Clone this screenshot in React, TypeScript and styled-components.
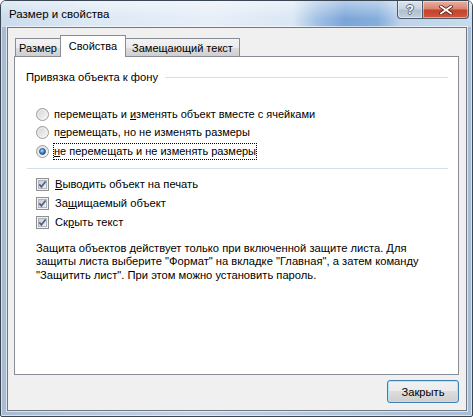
import React from 'react';
import styled, { createGlobalStyle } from 'styled-components';

const Global = createGlobalStyle`
  html, body { margin: 0; padding: 0; background: #ffffff; }
  body {
    font-family: "Liberation Sans", Arial, sans-serif;
    font-size: 11px;
    color: #000;
  }
  * { box-sizing: border-box; }
`;

const Window = styled.div`
  width: 473px;
  height: 417px;
  display: flex;
  flex-direction: column;
  border: 1px solid #3a4654;
  border-radius: 6px 6px 2px 2px;
  overflow: hidden;
  background: linear-gradient(90deg, #a8bbd0 0%, #c3d2e3 40%, #b4c6da 70%, #aabdd2 100%);
  box-shadow: inset 0 0 0 1px rgba(255, 255, 255, 0.55);
`;

const TitleBar = styled.div`
  height: 26px;
  display: flex;
  align-items: flex-start;
  background:
    linear-gradient(180deg, rgba(255, 255, 255, 0.45) 0%, rgba(255, 255, 255, 0) 70%),
    linear-gradient(90deg, #c9dbed 0%, #dde9f5 20%, #e6eef8 45%, #dae7f4 62%, #a3c2e5 67%, #7aa5d8 73%, #86aedc 80%, #bfd4eb 85%, #c9dbec 100%);
`;

const Title = styled.div`
  padding-left: 8px;
  line-height: 26px;
  font-size: 11.5px;
  color: #000;
`;

const CaptionGroup = styled.div`
  margin-left: auto;
  margin-right: 3px;
  display: flex;
`;

const CaptionButton = styled.div<{ $w: number; $close?: boolean }>`
  width: ${(p) => p.$w}px;
  height: 18px;
  display: flex;
  align-items: center;
  justify-content: center;
  border: 1px solid #4d5a69;
  border-top: none;
  border-radius: ${(p) => (p.$close ? '0 0 4px 0' : '0 0 0 4px')};
  margin-left: ${(p) => (p.$close ? '-1px' : '0')};
  background: ${(p) =>
    p.$close
      ? 'linear-gradient(180deg, #e9b1a3 0%, #d98572 45%, #c4432a 55%, #d2573c 100%)'
      : 'linear-gradient(180deg, #dde5ee 0%, #c9d4e0 45%, #b0bfcf 55%, #c2d0de 100%)'};
  box-shadow: inset 0 0 0 1px rgba(255, 255, 255, 0.45);
`;

const HelpGlyph = styled.span`
  font-family: "Liberation Sans", Arial, sans-serif;
  font-weight: bold;
  font-size: 13px;
  line-height: 13px;
  color: #fafafa;
  text-shadow: 1px 0 0 #5a6674, -1px 0 0 #5a6674, 0 1px 0 #5a6674, 0 -1px 0 #5a6674;
`;

const FrameBody = styled.div`
  flex: 1;
  display: flex;
  padding: 0 5px 5px 6px;
`;

const Client = styled.div`
  flex: 1;
  display: flex;
  flex-direction: column;
  background: #f0f0f0;
  border: 1px solid #6d7884;
  box-shadow: 0 0 0 1px rgba(255, 255, 255, 0.6);
  padding: 7px 7px 7px 6px;
`;

const TabStrip = styled.div`
  display: flex;
  align-items: flex-end;
  padding-left: 2px;
  position: relative;
  z-index: 2;
`;

const Tab = styled.div<{ $active?: boolean; $w: number }>`
  width: ${(p) => p.$w}px;
  height: ${(p) => (p.$active ? 22 : 18)}px;
  margin-bottom: ${(p) => (p.$active ? '-1px' : '0')};
  margin-left: -1px;
  display: flex;
  align-items: center;
  justify-content: center;
  padding-bottom: ${(p) => (p.$active ? 2 : 0)}px;
  border: 1px solid #898c95;
  border-bottom: none;
  position: relative;
  z-index: ${(p) => (p.$active ? 2 : 1)};
  background: ${(p) =>
    p.$active
      ? '#ffffff'
      : 'linear-gradient(180deg, #f3f3f3 0%, #ebebeb 50%, #dddddd 51%, #cfcfcf 100%)'};
  white-space: nowrap;
`;

const Pane = styled.div`
  flex: 1;
  display: flex;
  flex-direction: column;
  background: #ffffff;
  border: 1px solid #898c95;
  padding: 0 10px 0 12px;
`;

const GroupHeader = styled.div`
  margin-top: 13px;
  height: 15px;
  display: flex;
  align-items: center;
  gap: 7px;
  margin-left: -1px;
  line-height: 15px;
  font-size: 11.2px;
`;

const Rule = styled.div`
  flex: 1;
  height: 1px;
  background: #d5dfe5;
`;

const RadioList = styled.div`
  margin-top: 20px;
  display: flex;
  flex-direction: column;
  padding-left: 9px;
`;

const OptionRow = styled.div<{ $h: number; $gap: number }>`
  height: ${(p) => p.$h}px;
  display: flex;
  align-items: center;
  gap: ${(p) => p.$gap}px;
  white-space: nowrap;
`;

const Label = styled.span<{ $focus?: boolean; $size?: number }>`
  line-height: 15px;
  font-size: ${(p) => p.$size ?? 11}px;
  border: 1px ${(p) => (p.$focus ? 'dotted #000' : 'solid transparent')};
`;

const Separator = styled.div`
  margin-top: 7.5px;
  height: 1px;
  background: #d5dfe5;
`;

const CheckList = styled.div`
  margin-top: 5.5px;
  display: flex;
  flex-direction: column;
  padding-left: 9px;
`;

const Note = styled.p`
  margin: 10px 0 0 0;
  padding-left: 9px;
  line-height: 13.5px;
  font-size: 11.2px;
  white-space: nowrap;
`;

const Footer = styled.div`
  display: flex;
  justify-content: flex-end;
  margin-top: 5px;
`;

const PushButton = styled.button`
  width: 72px;
  height: 23px;
  font-family: inherit;
  font-size: 11.2px;
  color: #000;
  border: 1px solid #3c7fb1;
  border-radius: 3px;
  background: linear-gradient(180deg, #f2f2f2 0%, #ebebeb 45%, #dddddd 50%, #cfcfcf 100%);
  box-shadow: inset 0 0 0 1px #b2e3f8;
  padding: 0;
`;

const Radio: React.FC<{ checked?: boolean }> = ({ checked }) => (
  <svg width="13" height="13" viewBox="0 0 13 13">
    <defs>
      <linearGradient id="rbg" x1="0" y1="0" x2="1" y2="1">
        <stop offset="0" stopColor="#d0d0d0" />
        <stop offset="1" stopColor="#fbfbfb" />
      </linearGradient>
      <radialGradient id="rdot" cx="0.4" cy="0.35" r="0.7">
        <stop offset="0" stopColor="#bfe3ff" />
        <stop offset="0.5" stopColor="#3f8fd6" />
        <stop offset="1" stopColor="#1a4f88" />
      </radialGradient>
    </defs>
    <circle cx="6.5" cy="6.5" r="6" fill="url(#rbg)" stroke="#9c9c9c" />
    <circle cx="6.5" cy="6.5" r="4.6" fill="none" stroke="#f4f4f4" strokeWidth="0.8" />
    {checked && <circle cx="6.5" cy="6.5" r="3" fill="url(#rdot)" stroke="#16406e" strokeWidth="0.7" />}
  </svg>
);

const Check: React.FC = () => (
  <svg width="13" height="13" viewBox="0 0 13 13">
    <defs>
      <linearGradient id="cbg" x1="0" y1="0" x2="1" y2="1">
        <stop offset="0" stopColor="#c6cbd2" />
        <stop offset="1" stopColor="#f4f5f6" />
      </linearGradient>
    </defs>
    <rect x="0.5" y="0.5" width="12" height="12" fill="#f3f3f3" stroke="#8e8f8f" />
    <rect x="2.5" y="2.5" width="8" height="8" fill="url(#cbg)" stroke="#b1b5bb" />
    <path d="M3.3 6.4 L5.4 8.8 L9.6 3.4" fill="none" stroke="#4f6189" strokeWidth="1.7" />
  </svg>
);

const CloseGlyph: React.FC = () => (
  <svg width="14" height="10" viewBox="0 0 14 10">
    <path d="M2 1.5 L12 8.5 M12 1.5 L2 8.5" stroke="#5a2418" strokeWidth="3.4" strokeLinecap="square" />
    <path d="M2 1.5 L12 8.5 M12 1.5 L2 8.5" stroke="#ffffff" strokeWidth="1.8" strokeLinecap="square" />
  </svg>
);

export default function App() {
  return (
    <>
      <Global />
      <Window>
        <TitleBar>
          <Title>Размер и свойства</Title>
          <CaptionGroup>
            <CaptionButton $w={26}>
              <HelpGlyph>?</HelpGlyph>
            </CaptionButton>
            <CaptionButton $w={47} $close>
              <CloseGlyph />
            </CaptionButton>
          </CaptionGroup>
        </TitleBar>
        <FrameBody>
          <Client>
            <TabStrip>
              <Tab $w={46}>Размер</Tab>
              <Tab $w={66} $active>Свойства</Tab>
              <Tab $w={115}>Замещающий текст</Tab>
            </TabStrip>
            <Pane>
              <GroupHeader>
                <span>Привязка объекта к фону</span>
                <Rule />
              </GroupHeader>
              <RadioList>
                <OptionRow $h={18.5} $gap={4}>
                  <Radio />
                  <Label>перемещать и <u>и</u>зменять объект вместе с ячейками</Label>
                </OptionRow>
                <OptionRow $h={18.5} $gap={4}>
                  <Radio />
                  <Label>п<u>е</u>ремещать, но не изменять размеры</Label>
                </OptionRow>
                <OptionRow $h={18.5} $gap={4}>
                  <Radio checked />
                  <Label $focus><u>н</u>е перемещать и не изменять размеры</Label>
                </OptionRow>
              </RadioList>
              <Separator />
              <CheckList>
                <OptionRow $h={19} $gap={5}>
                  <Check />
                  <Label $size={11.2}><u>В</u>ыводить объект на печать</Label>
                </OptionRow>
                <OptionRow $h={19} $gap={5}>
                  <Check />
                  <Label $size={11.2}>За<u>щ</u>ищаемый объект</Label>
                </OptionRow>
                <OptionRow $h={19} $gap={5}>
                  <Check />
                  <Label $size={11.2}>Ск<u>р</u>ыть текст</Label>
                </OptionRow>
              </CheckList>
              <Note>
                Защита объектов действует только при включенной защите листа. Для
                <br />
                защиты листа выберите "Формат" на вкладке "Главная", а затем команду
                <br />
                "Защитить лист". При этом можно установить пароль.
              </Note>
            </Pane>
            <Footer>
              <PushButton>Закрыть</PushButton>
            </Footer>
          </Client>
        </FrameBody>
      </Window>
    </>
  );
}
